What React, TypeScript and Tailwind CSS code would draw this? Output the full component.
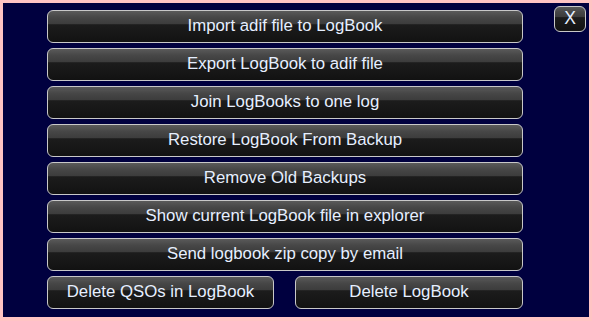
import React from "react"

const btn =
  "h-[33px] rounded-[6px] border border-[#c8c8c8] bg-[linear-gradient(to_bottom,#5a5a5a_0%,#474747_20%,#3c3c3c_42%,#1c1c1c_44%,#121212_100%)] text-[#e6efff] text-[16.8px] leading-none flex items-center justify-center"

const rows = [
  "Import adif file to LogBook",
  "Export LogBook to adif file",
  "Join LogBooks to one log",
  "Restore LogBook From Backup",
  "Remove Old Backups",
  "Show current LogBook file in explorer",
  "Send logbook zip copy by email",
]

export default function App() {
  return (
    <div
      className="w-[592px] h-[321px] bg-[#ffc4c4] pt-[3px] pl-[3px] pr-[3px] pb-[4px]"
      style={{ fontFamily: '"Liberation Sans", Arial, sans-serif' }}
    >
      <div className="h-full bg-[#00003f] flex">
        {/* Menu buttons */}
        <div className="ml-[44px] mt-[7px] w-[476px] flex flex-col gap-[5px]">
          {rows.map(label => (
            <div key={label} className={btn}>
              {label}
            </div>
          ))}
          <div className="flex justify-between">
            <div className={btn + " w-[227px]"}>Delete QSOs in LogBook</div>
            <div className={btn + " w-[228px]"}>Delete LogBook</div>
          </div>
        </div>
        {/* Close */}
        <div className="ml-auto mr-[3px] mt-[3px]">
          <div className={btn.replace("h-[33px]", "h-[26px]") + " w-[32px] text-[17.5px]"}>X</div>
        </div>
      </div>
    </div>
  )
}
